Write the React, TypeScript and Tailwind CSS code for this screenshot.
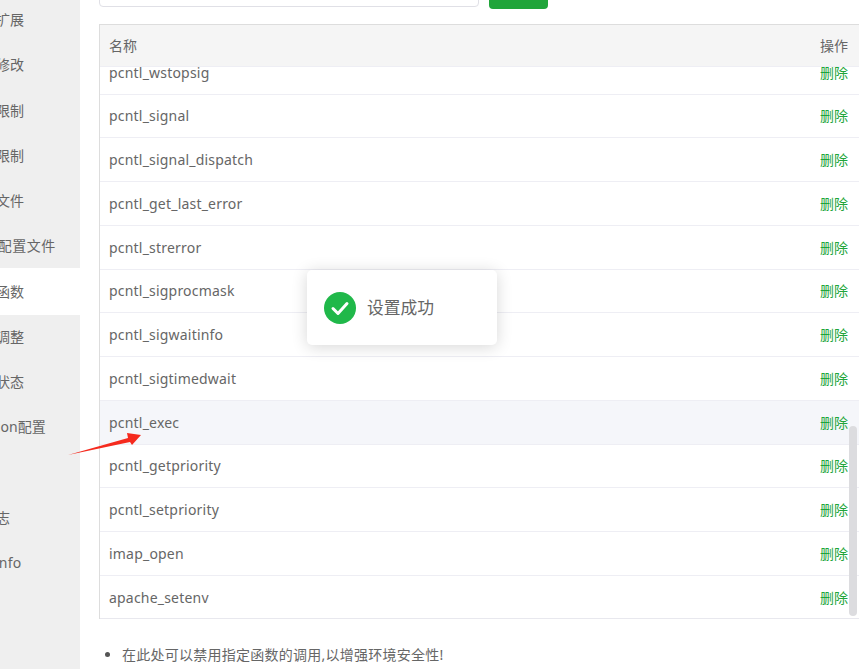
const sideItems = [
  "安装扩展",
  "配置修改",
  "上传限制",
  "超时限制",
  "配置文件",
  "FPM配置文件",
  "禁用函数",
  "性能调整",
  "负载状态",
  "Session配置",
  "日志",
  "慢日志",
  "phpinfo",
];

const funcs = [
  "pcntl_wstopsig",
  "pcntl_signal",
  "pcntl_signal_dispatch",
  "pcntl_get_last_error",
  "pcntl_strerror",
  "pcntl_sigprocmask",
  "pcntl_sigwaitinfo",
  "pcntl_sigtimedwait",
  "pcntl_exec",
  "pcntl_getpriority",
  "pcntl_setpriority",
  "imap_open",
  "apache_setenv",
];

export default function App() {
  return (
    <div className="relative flex h-[669px] w-[859px] overflow-hidden bg-white text-sm text-[#666] font-['Noto_Sans','Noto_Sans_CJK_SC',sans-serif]">
      {/* left menu, page is scrolled so labels are cut off */}
      <div className="h-full w-20 shrink-0 overflow-hidden bg-[#efefef]">
        <div className="-mt-[2.6px]">
          {sideItems.map((item) => (
            <div
              key={item}
              className={
                item === "禁用函数"
                  ? "relative -my-px flex h-[47.25px] items-center whitespace-nowrap bg-white -ml-8"
                  : item === "phpinfo"
                    ? "flex h-[45.25px] items-center whitespace-nowrap tracking-[0.3px] -ml-8"
                    : item === "FPM配置文件"
                      ? "flex h-[45.25px] items-center whitespace-nowrap tracking-[0.45px] -ml-8"
                      : "flex h-[45.25px] items-center whitespace-nowrap -ml-8"
              }
            >
              {item}
            </div>
          ))}
        </div>
      </div>

      <div className="w-[779px] pl-[19px]">
        <div className="flex h-6 items-start gap-[10px]">
          <div className="-mt-2 h-[15px] w-[380px] rounded-[4px] border border-[#e0e0e6] bg-white" />
          <div className="-mt-2 h-[17px] w-[59px] rounded-[4px] bg-[#20a53a]" />
        </div>

        <div className="relative w-[760px] border border-r-0 border-b-0 border-[#ddd]">
          <div className="flex h-[42px] items-center justify-between border-b border-[#eeeef4] bg-[#f5f5f5] pl-[9px] pr-[11px]">
            <span>名称</span>
            <span>操作</span>
          </div>
          <div className="h-[552px] overflow-hidden border-b border-[#e8e8ee]">
            <div className="-mt-[16.25px]">
              {funcs.map((name) => (
                <div
                  key={name}
                  className={
                    name === "pcntl_exec"
                      ? "flex h-[43.75px] items-center justify-between border-b border-[#eeeef4] bg-[#f5f6fa] pl-[9px] pr-[11px] pt-px last:border-b-0"
                      : "flex h-[43.75px] items-center justify-between border-b border-[#eeeef4] pl-[9px] pr-[11px] pt-px last:border-b-0"
                  }
                >
                  <span className="tracking-[0.2px]">{name}</span>
                  <span className="text-[#20a53a]">删除</span>
                </div>
              ))}
            </div>
          </div>
          <div className="absolute right-[2px] top-[401px] h-[190px] w-2 rounded-full bg-[#dcdcdf]" />
        </div>

        <ul className="mt-[26px] list-disc pl-[23px] tracking-[0.25px] marker:text-[#555]">
          <li>在此处可以禁用指定函数的调用,以增强环境安全性!</li>
        </ul>
      </div>

      {/* toast */}
      <div className="absolute left-[307px] top-[270px] flex h-[75px] w-[190px] items-center gap-[11px] rounded-[5px] bg-white pl-[17px] shadow-[0_2px_16px_rgba(0,0,0,0.16)]">
        <svg width="32" height="32" viewBox="0 0 32 32">
          <circle cx="16" cy="16" r="16" fill="#20b84a" />
          <path d="M9 16.5l5 5 9-10" fill="none" stroke="#fff" strokeWidth="3" strokeLinecap="round" strokeLinejoin="round" />
        </svg>
        <span className="pt-px text-[16.75px]">设置成功</span>
      </div>

      {/* red annotation arrow */}
      <svg className="absolute left-[60px] top-[425px]" width="90" height="35" viewBox="0 0 90 35">
        <path d="M8 30L68 13L67 8L81 10L72 20L70 17Z" fill="#f52a1e" />
      </svg>
    </div>
  );
}
